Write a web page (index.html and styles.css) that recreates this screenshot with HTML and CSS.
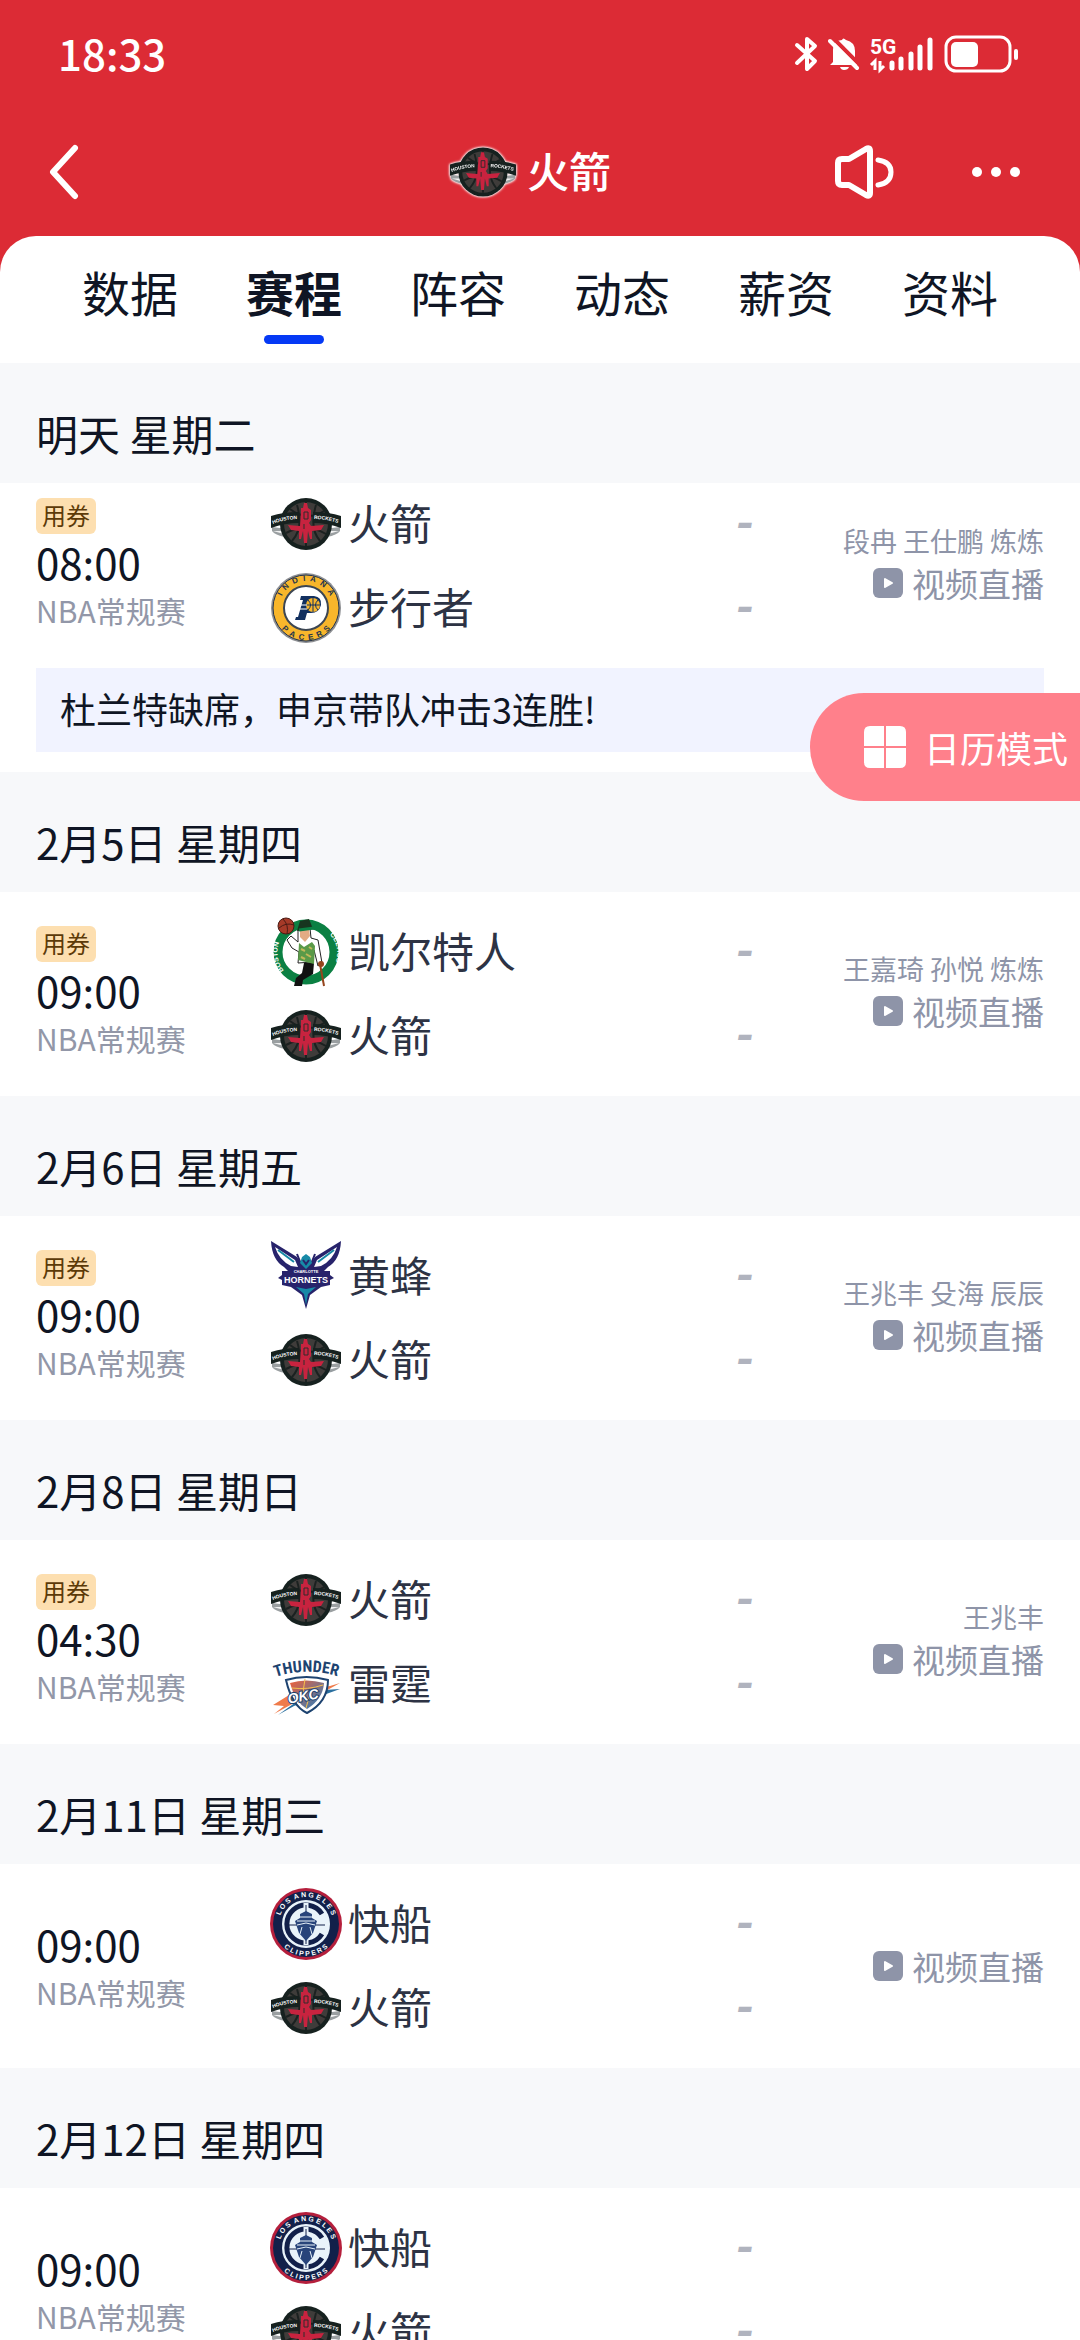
FILE: index.html
```
<!DOCTYPE html>
<html lang="zh-CN">
<head>
    <meta charset="UTF-8">
    <meta name="viewport" content="width=device-width, initial-scale=1.0">
    <title>火箭 赛程</title>
    <link rel="stylesheet" href="styles.css">
</head>
<body>
    <!-- Team logos and shared icons -->
    <svg class="sprite" aria-hidden="true">
        <defs>
            <path id="rockets-left" d="M3 36 Q15 31 31 31"/>
            <path id="rockets-right" d="M44 31 Q57 31 71 36"/>
            <path id="pacers-top" d="M9 36 A27 27 0 0 1 63 36"/>
            <path id="pacers-bottom" d="M4 36 A32 32 0 0 0 68 36"/>
            <path id="celtics-left" d="M21 61 A29 29 0 0 1 14 18"/>
            <path id="celtics-right" d="M48 12 A26 26 0 0 1 58 57"/>
            <path id="clippers-top" d="M9 36 A27 27 0 0 1 63 36"/>
            <path id="clippers-bottom" d="M4 36 A32 32 0 0 0 68 36"/>
            <path id="thunder-arc" d="M3 30 Q36 18 70 29"/>
            <linearGradient id="okc-fill" x1="0" y1="0" x2="1" y2="1">
                <stop offset="0" stop-color="#f0603a"/>
                <stop offset="1" stop-color="#1f7fc4"/>
            </linearGradient>

            <symbol id="rockets" viewBox="0 0 72 72">
                <path d="M2 39 L2 43 Q5 47 15 49 L18 41 Z" fill="#9a9fa1"/>
                <path d="M70 39 L70 43 Q67 47 57 49 L54 41 Z" fill="#9a9fa1"/>
                <path d="M3 43 L14 43 L14 46 Z M69 43 L58 43 L58 46 Z" fill="#f1f2f2"/>
                <circle cx="36" cy="36" r="26" fill="#16211f"/>
                <circle cx="36" cy="36" r="22" fill="#3f3c3a"/>
                <path d="M20 21 Q36 34 54 23 M16 45 Q36 34 56 46 M36 14 V58 M22 53 Q34 40 27 17 M50 53 Q39 40 46 17" fill="none" stroke="#1b2120" stroke-width="2"/>
                <path d="M1 28 Q13 24 29 24 L29 35 Q15 35 1 40 Z" fill="#16211f"/>
                <path d="M71 28 Q59 24 43 24 L43 35 Q57 35 71 40 Z" fill="#16211f"/>
                <path d="M31 24 L31 20 L33 20 L34 15 L37 15 L38 20 L41 22 V32 L39 35 L41 38 L54 37 L51 42 L42 43 L42 51 L40 51 L38 43 L37 55 H34 L33 43 L31 51 H29 V43 L21 42 L18 37 L30 38 Z" fill="#c8233f"/>
                <path d="M34 24 H38 V31 H34 Z M34 36 V41" fill="none" stroke="#302c2c" stroke-width="1"/>
                <text class="rockets-word"><textPath href="#rockets-left">HOUSTON</textPath></text>
                <text class="rockets-word"><textPath href="#rockets-right">ROCKETS</textPath></text>
            </symbol>

            <symbol id="pacers" viewBox="0 0 72 72">
                <circle cx="36" cy="36" r="35" fill="#8d8f92"/>
                <circle cx="36" cy="36" r="33" fill="#f8b62b" stroke="#24344d" stroke-width="1"/>
                <circle cx="36" cy="36" r="22" fill="#fff" stroke="#3c4653" stroke-width="2"/>
                <path d="M31 24 H44 Q52 25 51 33 Q49 41 41 41 L37 41 L35 48 H25 L26 45 H28 L33 28 H30 Z" fill="#12305f"/>
                <circle cx="43" cy="33" r="7" fill="#f8b62b"/>
                <path d="M36 33 H50 M43 26 V40 M38 28 Q43 33 38 38 M48 28 Q43 33 48 38" fill="none" stroke="#12305f" stroke-width="1"/>
                <path d="M29 33 H37 M28 37 H37" stroke="#fff" stroke-width="1"/>
                <text class="pacers-word"><textPath href="#pacers-top" startOffset="50%">I&nbsp;&nbsp;N&nbsp;&nbsp;D&nbsp;&nbsp;I&nbsp;&nbsp;A&nbsp;&nbsp;N&nbsp;&nbsp;A</textPath></text>
                <text class="pacers-word"><textPath href="#pacers-bottom" startOffset="50%">P&nbsp;&nbsp;A&nbsp;&nbsp;C&nbsp;&nbsp;E&nbsp;&nbsp;R&nbsp;&nbsp;S</textPath></text>
            </symbol>

            <symbol id="celtics" viewBox="0 0 72 72">
                <circle cx="36" cy="36" r="28" fill="#fff" stroke="#0b8043" stroke-width="9"/>
                <path d="M34 47 L44 47 L43 58 L33 64 L32 70 L24 70 L26 62 L32 57 Z" fill="#111"/>
                <path d="M28 14 L40 12 L41 22 L48 24 L52 47 L48 50 L44 34 L43 46 L28 47 L29 36 L22 32 L17 24 L21 20 L28 26 Z" fill="#fff" stroke="#222" stroke-width="1"/>
                <path d="M29 27 L34 31 L42 26 L45 30 L44 48 L28 44 Z" fill="#5a9a48"/>
                <path d="M31 33 l4 2 M36 38 l5 3 M31 41 l4 2 M39 31 l3 2" stroke="#c3b95a" stroke-width="2"/>
                <path d="M30 12 Q36 9 39 13 L40 20 L35 26 L30 21 Z" fill="#e3ab84"/>
                <path d="M30 5 L39 3 L43 13 L27 15 Z" fill="#17351f"/>
                <path d="M29 14 L44 12" stroke="#0b8043" stroke-width="3"/>
                <path d="M50 48 L54 70" stroke="#96451d" stroke-width="2"/>
                <circle cx="51" cy="48" r="3" fill="#96451d"/>
                <circle cx="16" cy="10" r="8" fill="#a63a28" stroke="#4b1b14" stroke-width="1"/>
                <path d="M9 12 Q16 6 24 9 M13 3 Q19 9 17 18" fill="none" stroke="#4b1b14" stroke-width="1"/>
                <text class="celtics-word"><textPath href="#celtics-left" startOffset="50%">BOSTON</textPath></text>
                <text class="celtics-word"><textPath href="#celtics-right" startOffset="50%">CELTICS</textPath></text>
            </symbol>

            <symbol id="hornets" viewBox="0 0 72 72">
                <path d="M1 1 L27 17 L32 24 L40 24 L45 17 L71 1 Q70 20 58 27 L54 31 H60 V35 L64 38 L60 40 V45 L51 47 L40 55 L36 69 L32 55 L21 47 L12 45 V40 L8 38 L12 35 V31 H18 L14 27 Q2 20 1 1 Z" fill="#27236b"/>
                <path d="M5 7 L25 20 L28 27 L21 26 Q9 20 5 7 Z M67 7 L47 20 L44 27 L51 26 Q63 20 67 7 Z" fill="#fff"/>
                <path d="M8 10 L24 22 M64 10 L48 22" stroke="#1687a4" stroke-width="2"/>
                <path d="M31 24 L27 14 M41 24 L45 14" stroke="#27236b" stroke-width="2"/>
                <path d="M32 17 L36 14 L40 17 L42 23 L36 29 L30 23 Z M26 47 L36 49 L46 47 L38 54 L36 65 L34 54 Z" fill="#178aa7"/>
                <path d="M33 20 L36 24 L39 20" fill="none" stroke="#27236b" stroke-width="2"/>
                <text class="hornets-small" x="36" y="33">CHARLOTTE</text>
                <text class="hornets-word" x="36" y="43">HORNETS</text>
            </symbol>

            <symbol id="thunder" viewBox="0 0 72 72">
                <path d="M3 57 L24 44 L60 38 L70 35 L50 46 L24 55 L4 66 L14 58 Z" fill="#ef7b4b"/>
                <path d="M8 67 L26 54 L54 42 L70 41 L48 49 L24 58 Z" fill="#2a6f9f"/>
                <path d="M16 32 Q36 26 58 32 Q58 54 37 65 Q22 58 16 32 Z" fill="#fff" stroke="#1d4370" stroke-width="2"/>
                <path d="M20 35 Q36 30 54 35 Q53 51 37 61 Q25 54 20 35 Z" fill="url(#okc-fill)"/>
                <path d="M35 31 L33 44 M22 40 Q38 42 53 37 M40 46 L36 60" fill="none" stroke="#f8c14d" stroke-width="1"/>
                <text class="okc-word" x="33" y="53" transform="rotate(-10 33 48)">OKC</text>
                <text class="thunder-word"><textPath href="#thunder-arc" startOffset="50%">THUNDER</textPath></text>
            </symbol>

            <symbol id="clippers" viewBox="0 0 72 72">
                <circle cx="36" cy="36" r="36" fill="#b51f3c"/>
                <circle cx="36" cy="36" r="33" fill="#12204a"/>
                <circle cx="36" cy="36" r="24" fill="#e9f3fa"/>
                <path d="M52 26 A19 19 0 1 0 52 46" fill="none" stroke="#12204a" stroke-width="5"/>
                <path d="M36 15 V57" stroke="#e9f3fa" stroke-width="5"/>
                <path d="M36 17 V56 M17 37 H55" stroke="#12204a" stroke-width="1"/>
                <path d="M30 26 L36 23 L42 26 V30 L47 33 L43 45 L36 53 L29 45 L25 33 L30 30 Z" fill="#28447a"/>
                <path d="M30 29 H42 M27 33 H45 M27 37 L36 35 L45 37 M32 39 L30 46 M40 39 L42 46" fill="none" stroke="#e9f3fa" stroke-width="1"/>
                <text class="clippers-word"><textPath href="#clippers-top" startOffset="50%">L&nbsp;O&nbsp;S&nbsp; A&nbsp;N&nbsp;G&nbsp;E&nbsp;L&nbsp;E&nbsp;S</textPath></text>
                <text class="clippers-word"><textPath href="#clippers-bottom" startOffset="50%">C&nbsp;L&nbsp;I&nbsp;P&nbsp;P&nbsp;E&nbsp;R&nbsp;S</textPath></text>
            </symbol>

            <symbol id="play" viewBox="0 0 30 30">
                <rect width="30" height="30" rx="6" fill="#8e94a8"/>
                <path d="M12 11 L19 15 L12 19 Z" fill="#fff" stroke="#fff" stroke-width="2" stroke-linejoin="round"/>
            </symbol>
        </defs>
    </svg>

    <div class="app">
        <header class="header">
            <div class="status-bar">
                <span class="clock">18:33</span>
                <div class="status-icons">
                    <svg width="24" height="36" viewBox="0 0 24 36">
                        <path d="M3 9 L21 25 L13 33 V3 L21 10 L3 27" fill="none" stroke="#fff" stroke-width="4" stroke-linejoin="round" stroke-linecap="round"/>
                    </svg>
                    <svg width="32" height="36" viewBox="0 0 32 36">
                        <path d="M5 26 V14 Q5 4 14 4 Q15 1 18 4 Q27 6 27 15 V25 L30 29 H2 Z" fill="#fff"/>
                        <path d="M12 31 H21 Q20 34 16 34 Q13 34 12 31 Z" fill="#fff"/>
                        <path d="M5 2 L32 29" stroke="#dc2b35" stroke-width="4"/>
                        <path d="M2 5 L29 32" stroke="#fff" stroke-width="4" stroke-linecap="round"/>
                    </svg>
                    <svg class="network" width="64" height="36" viewBox="0 0 64 36">
                        <text x="0" y="18">5G</text>
                        <path d="M1 29 L5 25 V34 M14 30 L10 34 V25" fill="none" stroke="#fff" stroke-width="3"/>
                        <path d="M22 27 V32 M31 23 V32 M41 18 V32 M50 11 V32 M60 4 V32" stroke="#fff" stroke-width="5" stroke-linecap="round"/>
                    </svg>
                    <svg width="76" height="38" viewBox="0 0 76 38">
                        <rect x="2" y="2" width="64" height="34" rx="10" fill="none" stroke="#fff" stroke-width="3"/>
                        <rect x="7" y="7" width="27" height="25" rx="5" fill="#fff"/>
                        <rect x="70" y="14" width="4" height="11" rx="2" fill="#fff"/>
                    </svg>
                </div>
            </div>
            <div class="nav-bar">
                <button class="icon-btn" aria-label="返回">
                    <svg width="32" height="56" viewBox="0 0 32 56">
                        <path d="M27 4 L5 28 L27 52" fill="none" stroke="#fff" stroke-width="6" stroke-linecap="round" stroke-linejoin="round"/>
                    </svg>
                </button>
                <h1 class="title">
                    <svg class="title-logo"><use href="#rockets"/></svg>
                    <span>火箭</span>
                </h1>
                <div class="nav-actions">
                    <button class="icon-btn" aria-label="声音">
                        <svg width="60" height="54" viewBox="0 0 60 54">
                            <path d="M8 14 H15 L32 4 Q36 2 36 6 V48 Q36 52 32 50 L15 40 H8 Q4 40 4 36 V18 Q4 14 8 14 Z" fill="none" stroke="#fff" stroke-width="6" stroke-linejoin="round"/>
                            <path d="M44 15 Q57 17 57 27 Q57 38 44 40" fill="none" stroke="#fff" stroke-width="5" stroke-linecap="round"/>
                        </svg>
                    </button>
                    <button class="icon-btn" aria-label="更多">
                        <svg width="48" height="12" viewBox="0 0 48 12">
                            <circle cx="5" cy="6" r="5" fill="#fff"/>
                            <circle cx="24" cy="6" r="5" fill="#fff"/>
                            <circle cx="43" cy="6" r="5" fill="#fff"/>
                        </svg>
                    </button>
                </div>
            </div>
        </header>

        <nav class="tabs">
            <a href="#" class="tab">数据</a>
            <a href="#" class="tab active">赛程</a>
            <a href="#" class="tab">阵容</a>
            <a href="#" class="tab">动态</a>
            <a href="#" class="tab">薪资</a>
            <a href="#" class="tab">资料</a>
        </nav>

        <main class="schedule">
            <h2 class="date">明天 星期二</h2>
            <section class="day featured">
                <div class="match">
                    <div class="info">
                        <span class="coupon">用券</span>
                        <span class="time">08:00</span>
                        <span class="league">NBA常规赛</span>
                    </div>
                    <div class="teams">
                        <div class="team">
                            <svg class="logo"><use href="#rockets"/></svg>
                            <span class="name">火箭</span>
                            <span class="score">-</span>
                        </div>
                        <div class="team">
                            <svg class="logo"><use href="#pacers"/></svg>
                            <span class="name">步行者</span>
                            <span class="score">-</span>
                        </div>
                    </div>
                    <div class="live">
                        <span class="hosts">段冉 王仕鹏 炼炼</span>
                        <a href="#" class="video"><svg class="play"><use href="#play"/></svg>视频直播</a>
                    </div>
                </div>
                <p class="notice">杜兰特缺席，申京带队冲击3连胜!</p>
            </section>

            <h2 class="date">2月5日 星期四</h2>
            <section class="day">
                <div class="match">
                    <div class="info">
                        <span class="coupon">用券</span>
                        <span class="time">09:00</span>
                        <span class="league">NBA常规赛</span>
                    </div>
                    <div class="teams">
                        <div class="team">
                            <svg class="logo"><use href="#celtics"/></svg>
                            <span class="name">凯尔特人</span>
                            <span class="score">-</span>
                        </div>
                        <div class="team">
                            <svg class="logo"><use href="#rockets"/></svg>
                            <span class="name">火箭</span>
                            <span class="score">-</span>
                        </div>
                    </div>
                    <div class="live">
                        <span class="hosts">王嘉琦 孙悦 炼炼</span>
                        <a href="#" class="video"><svg class="play"><use href="#play"/></svg>视频直播</a>
                    </div>
                </div>
            </section>

            <h2 class="date">2月6日 星期五</h2>
            <section class="day">
                <div class="match">
                    <div class="info">
                        <span class="coupon">用券</span>
                        <span class="time">09:00</span>
                        <span class="league">NBA常规赛</span>
                    </div>
                    <div class="teams">
                        <div class="team">
                            <svg class="logo"><use href="#hornets"/></svg>
                            <span class="name">黄蜂</span>
                            <span class="score">-</span>
                        </div>
                        <div class="team">
                            <svg class="logo"><use href="#rockets"/></svg>
                            <span class="name">火箭</span>
                            <span class="score">-</span>
                        </div>
                    </div>
                    <div class="live">
                        <span class="hosts">王兆丰 殳海 辰辰</span>
                        <a href="#" class="video"><svg class="play"><use href="#play"/></svg>视频直播</a>
                    </div>
                </div>
            </section>

            <h2 class="date">2月8日 星期日</h2>
            <section class="day">
                <div class="match">
                    <div class="info">
                        <span class="coupon">用券</span>
                        <span class="time">04:30</span>
                        <span class="league">NBA常规赛</span>
                    </div>
                    <div class="teams">
                        <div class="team">
                            <svg class="logo"><use href="#rockets"/></svg>
                            <span class="name">火箭</span>
                            <span class="score">-</span>
                        </div>
                        <div class="team">
                            <svg class="logo"><use href="#thunder"/></svg>
                            <span class="name">雷霆</span>
                            <span class="score">-</span>
                        </div>
                    </div>
                    <div class="live">
                        <span class="hosts">王兆丰</span>
                        <a href="#" class="video"><svg class="play"><use href="#play"/></svg>视频直播</a>
                    </div>
                </div>
            </section>

            <h2 class="date">2月11日 星期三</h2>
            <section class="day">
                <div class="match">
                    <div class="info">
                        <span class="time">09:00</span>
                        <span class="league">NBA常规赛</span>
                    </div>
                    <div class="teams">
                        <div class="team">
                            <svg class="logo"><use href="#clippers"/></svg>
                            <span class="name">快船</span>
                            <span class="score">-</span>
                        </div>
                        <div class="team">
                            <svg class="logo"><use href="#rockets"/></svg>
                            <span class="name">火箭</span>
                            <span class="score">-</span>
                        </div>
                    </div>
                    <div class="live">
                        <a href="#" class="video"><svg class="play"><use href="#play"/></svg>视频直播</a>
                    </div>
                </div>
            </section>

            <h2 class="date">2月12日 星期四</h2>
            <section class="day">
                <div class="match">
                    <div class="info">
                        <span class="time">09:00</span>
                        <span class="league">NBA常规赛</span>
                    </div>
                    <div class="teams">
                        <div class="team">
                            <svg class="logo"><use href="#clippers"/></svg>
                            <span class="name">快船</span>
                            <span class="score">-</span>
                        </div>
                        <div class="team">
                            <svg class="logo"><use href="#rockets"/></svg>
                            <span class="name">火箭</span>
                            <span class="score">-</span>
                        </div>
                    </div>
                </div>
            </section>
        </main>

        <button class="calendar-btn">
            <svg width="42" height="42" viewBox="0 0 42 42">
                <path d="M6 0 H20 V20 H0 V6 Q0 0 6 0 Z M22 0 H36 Q42 0 42 6 V20 H22 Z M0 22 H20 V42 H6 Q0 42 0 36 Z M22 22 H42 V36 Q42 42 36 42 H22 Z" fill="#fff"/>
            </svg>
            日历模式
        </button>
    </div>
</body>
</html>
```
FILE: styles.css
```
* {
    box-sizing: border-box;
}
body {
    margin: 0;
    font-family: "Noto Sans CJK SC", sans-serif;
    color: #0f1524;
    background-color: #dc2b35;
}
a {
    color: inherit;
    text-decoration: none;
}
button {
    padding: 0;
    border: none;
    background: none;
    font-family: inherit;
    cursor: pointer;
}
.sprite {
    position: absolute;
    width: 0;
    height: 0;
}
.app {
    position: relative;
    display: flex;
    flex-direction: column;
    height: 100vh;
    overflow: hidden;
}

/* Header */
.header {
    flex-shrink: 0;
    color: #fff;
}
.status-bar {
    display: flex;
    justify-content: space-between;
    align-items: center;
    height: 108px;
    padding: 0 60px 0 58px;
}
.clock {
    padding-bottom: 4px;
    font-size: 42px;
    font-weight: 500;
}
.status-icons {
    display: flex;
    align-items: center;
    gap: 10px;
}
.network {
    overflow: visible;
}
.network text {
    font-family: Roboto, sans-serif;
    font-size: 21px;
    font-weight: 700;
    fill: #fff;
}
.nav-bar {
    display: grid;
    grid-template-columns: 1fr auto 1fr;
    align-items: center;
    height: 128px;
    padding: 0 60px 0 48px;
}
.icon-btn {
    display: flex;
    align-items: center;
}
.title {
    display: flex;
    align-items: center;
    gap: 10px;
    margin: 0 8px 0 0;
    font-size: 42px;
    font-weight: 500;
    line-height: 60px;
}
.title span {
    padding-bottom: 5px;
}
.title-logo {
    width: 68px;
    height: 68px;
    filter: drop-shadow(0 0 1px #fff) drop-shadow(0 0 1px #fff);
}
.nav-actions {
    display: flex;
    justify-content: flex-end;
    gap: 78px;
}

/* Tabs */
.tabs {
    display: flex;
    flex-shrink: 0;
    justify-content: space-between;
    height: 127px;
    padding: 19px 82px 0;
    background-color: #fff;
    border-radius: 36px 36px 0 0;
}
.tab {
    display: flex;
    flex-direction: column;
    align-items: center;
    font-size: 48px;
    line-height: 72px;
}
.tab.active {
    font-weight: 700;
}
.tab.active::after {
    content: "";
    width: 60px;
    height: 9px;
    margin-top: 8px;
    border-radius: 5px;
    background-color: #0539f5;
}

/* Schedule list */
.schedule {
    flex: 1;
    overflow: hidden;
    background-color: #fff;
}
.date {
    height: 120px;
    margin: 0;
    padding: 40px 36px 0;
    font-size: 42px;
    font-weight: 400;
    line-height: 60px;
    background-color: #f7f8fa;
}
.day {
    padding: 19px 36px;
}
.day.featured {
    padding: 0 36px 20px;
}
.match {
    display: grid;
    grid-template-columns: 234px 1fr 290px;
    align-items: center;
}
.info {
    display: flex;
    flex-direction: column;
    align-items: flex-start;
}
.coupon {
    width: 60px;
    height: 36px;
    margin-bottom: 4px;
    border-radius: 6px;
    font-size: 24px;
    line-height: 34px;
    text-align: center;
    color: #5c3a08;
    background-color: #fddfb0;
}
.time {
    font-size: 42px;
    line-height: 48px;
}
.time:first-child {
    padding-top: 4px;
}
.league {
    font-size: 30px;
    line-height: 48px;
    color: #9297a8;
}
.teams {
    display: flex;
    flex-direction: column;
    gap: 2px;
}
.team {
    display: flex;
    align-items: center;
    height: 82px;
}
.logo {
    flex-shrink: 0;
    width: 72px;
    height: 72px;
}
.name {
    margin-left: 6px;
    padding-bottom: 4px;
    font-size: 42px;
    line-height: 60px;
    color: #2d3344;
}
.score {
    margin-left: auto;
    font-family: Roboto, sans-serif;
    font-size: 48px;
    font-style: italic;
    font-weight: 700;
    line-height: 60px;
    color: #b0b3be;
}
.live {
    display: flex;
    flex-direction: column;
    align-items: flex-end;
    color: #8e94a8;
}
.hosts {
    font-size: 27px;
    line-height: 40px;
}
.video {
    display: flex;
    align-items: center;
    gap: 9px;
    font-size: 33px;
    line-height: 44px;
}
.hosts + .video {
    margin-bottom: 6px;
}
.play {
    width: 30px;
    height: 30px;
}
.notice {
    margin: 19px 0 0;
    padding: 0 24px 4px;
    font-size: 36px;
    line-height: 80px;
    background-color: #f1f3ff;
}

/* Floating switch to the calendar view */
.calendar-btn {
    position: absolute;
    top: 693px;
    right: 0;
    display: flex;
    align-items: center;
    gap: 18px;
    height: 108px;
    padding: 0 12px 0 54px;
    border-radius: 54px 0 0 54px;
    font-size: 36px;
    color: #fff;
    background-color: #ff808b;
}

/* Lettering inside the logos */
.rockets-word,
.pacers-word,
.celtics-word,
.clippers-word,
.thunder-word,
.hornets-word,
.hornets-small,
.okc-word {
    font-family: "Liberation Sans", sans-serif;
    font-weight: 700;
    text-anchor: middle;
    fill: #fff;
}
.rockets-word {
    font-size: 5px;
    text-anchor: start;
}
.pacers-word {
    font-size: 8px;
    fill: #24344d;
}
.celtics-word {
    font-size: 7px;
}
.clippers-word {
    font-size: 7px;
}
.thunder-word {
    font-family: "Roboto Condensed", "Liberation Sans Narrow", Roboto, sans-serif;
    font-size: 16px;
    fill: #1d4370;
}
.hornets-word {
    font-size: 9px;
}
.hornets-small {
    font-size: 4px;
}
.okc-word {
    font-size: 14px;
    font-style: italic;
    stroke: #1d4370;
    stroke-width: 2px;
    paint-order: stroke;
}
```
